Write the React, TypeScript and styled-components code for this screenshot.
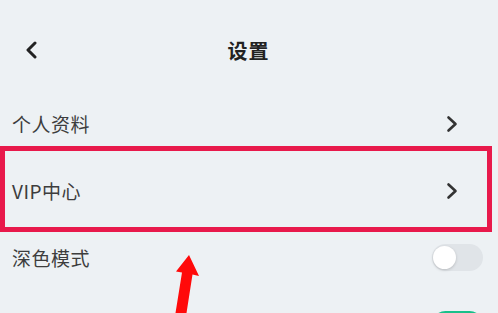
import React from "react";
import styled, { createGlobalStyle } from "styled-components";

const GlobalStyle = createGlobalStyle`
  html, body {
    margin: 0;
    padding: 0;
    background: #edf1f4;
  }
  body {
    font-family: "Noto Sans CJK SC", "Noto Sans", sans-serif;
  }
`;

interface Setting {
  label: string;
  kind: "link" | "toggle";
  on?: boolean;
  highlighted?: boolean;
}

const settings: Setting[] = [
  { label: "个人资料", kind: "link" },
  { label: "VIP中心", kind: "link", highlighted: true },
  { label: "深色模式", kind: "toggle", on: false },
  { label: "消息通知提醒", kind: "toggle", on: true },
];

const Chevron: React.FC<{ direction: "left" | "right"; className?: string }> = ({
  direction,
  className,
}) => (
  <svg className={className} width="12" height="18" viewBox="0 0 12 18" fill="none">
    <path
      d={direction === "left" ? "M10 2 L3 9 L10 16" : "M2.5 2.5 L9.5 9 L2.5 15.5"}
      stroke="currentColor"
      strokeWidth={direction === "left" ? 3 : 2.6}
      strokeLinecap="round"
      strokeLinejoin="round"
    />
  </svg>
);

export default function App() {
  return (
    <Screen>
      <GlobalStyle />
      <Header>
        <BackButton>
          <Chevron direction="left" />
        </BackButton>
        <Title>设置</Title>
        <span />
      </Header>

      <List>
        {settings.map((item) => (
          <Row key={item.label}>
            <Label>{item.label}</Label>
            {item.kind === "link" ? (
              <RowChevron direction="right" />
            ) : (
              <Switch $on={!!item.on}>
                <Knob $on={!!item.on} />
              </Switch>
            )}
            {item.highlighted && <Highlight />}
          </Row>
        ))}
      </List>

      <Arrow width="498" height="313" viewBox="0 0 498 313">
        <polygon
          points="189,255 199,276 192.5,274.5 186.5,313 175.5,313 182,272.5 176,271.5"
          fill="#ff0a0a"
        />
      </Arrow>
    </Screen>
  );
}

const Screen = styled.div`
  position: relative;
  width: 498px;
  height: 313px;
  overflow: hidden;
  background: #edf1f4;
`;

const Header = styled.header`
  display: grid;
  grid-template-columns: 1fr auto 1fr;
  align-items: center;
  height: 80px;
  padding: 10px 0 0 25px;
`;

const BackButton = styled.div`
  display: flex;
  align-items: center;
  color: #222;
`;

const Title = styled.h1`
  margin: 0;
  font-size: 20px;
  font-weight: 600;
  color: #222;
  letter-spacing: 1px;
  transform: translateX(-13px);
`;

const List = styled.div`
  display: flex;
  flex-direction: column;
`;

const Row = styled.div`
  position: relative;
  display: flex;
  align-items: center;
  justify-content: space-between;
  height: 67px;
  padding: 0 15px 0 12px;
`;

const Label = styled.span`
  font-size: 19px;
  color: #3d3d3d;
  letter-spacing: 0.5px;
`;

const RowChevron = styled(Chevron)`
  margin-right: 25px;
  color: #333;
`;

const Switch = styled.div<{ $on: boolean }>`
  position: relative;
  width: 51px;
  height: 27px;
  border-radius: 14px;
  background: ${({ $on }) => ($on ? "#19c08a" : "#e0e4e8")};
`;

const Knob = styled.div<{ $on: boolean }>`
  position: absolute;
  top: 2px;
  left: ${({ $on }) => ($on ? "26px" : "1px")};
  width: 23px;
  height: 23px;
  border-radius: 50%;
  background: #fff;
  box-shadow: 0 1px 3px rgba(0, 0, 0, 0.18);
`;

const Highlight = styled.div`
  position: absolute;
  top: -11px;
  bottom: -8px;
  left: 0;
  right: 6px;
  border: 5px solid #e8194b;
  pointer-events: none;
`;

const Arrow = styled.svg`
  position: absolute;
  top: 0;
  left: 0;
  pointer-events: none;
`;
